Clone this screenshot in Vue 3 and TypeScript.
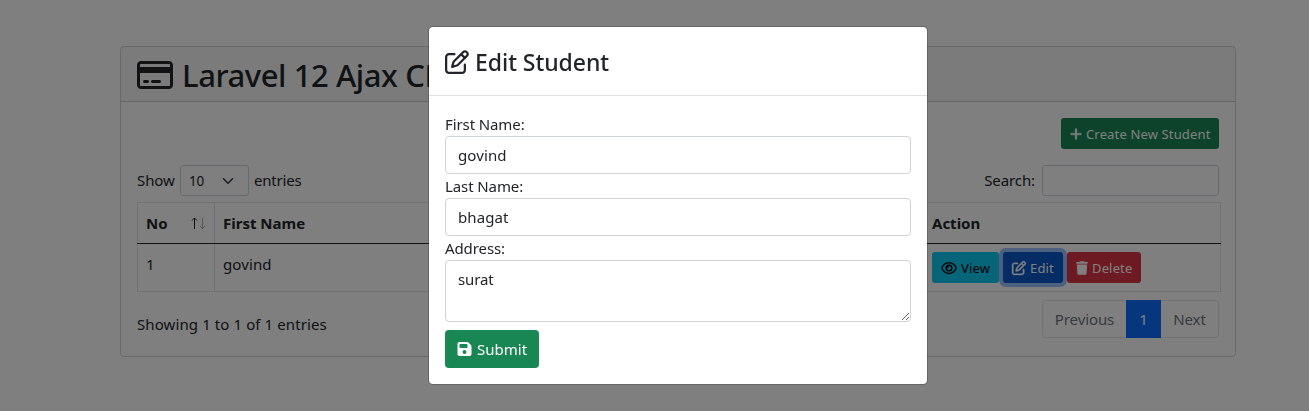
<script setup lang="ts">
import { ref } from 'vue'

interface Student {
  id: number
  firstName: string
  lastName: string
  address: string
}

const students = ref<Student[]>([
  { id: 1, firstName: 'govind', lastName: 'bhagat', address: 'surat' },
])

const form = ref({ firstName: 'govind', lastName: 'bhagat', address: 'surat' })
const search = ref('')
const pageSize = ref('10')

const icons = {
  card: 'M512 80c8.8 0 16 7.2 16 16v32H48V96c0-8.8 7.2-16 16-16H512zm16 144V416c0 8.8-7.2 16-16 16H64c-8.8 0-16-7.2-16-16V224H528zM64 32C28.7 32 0 60.7 0 96V416c0 35.3 28.7 64 64 64H512c35.3 0 64-28.7 64-64V96c0-35.3-28.7-64-64-64H64zm56 304c-13.3 0-24 10.7-24 24s10.7 24 24 24h48c13.3 0 24-10.7 24-24s-10.7-24-24-24H120zm128 0c-13.3 0-24 10.7-24 24s10.7 24 24 24H360c13.3 0 24-10.7 24-24s-10.7-24-24-24H248z',
  edit: 'M441 58.9L453.1 71c9.4 9.4 9.4 24.6 0 33.9L424 134.1 377.9 88 407 58.9c9.4-9.4 24.6-9.4 33.9 0zM209.8 256.2L344 121.9 390.1 168 255.8 302.2c-2.9 2.9-6.5 5-10.4 6.1l-58.5 16.7 16.7-58.5c1.1-3.9 3.2-7.5 6.1-10.4zM373.1 25L175.8 222.2c-8.7 8.7-15 19.4-18.3 31.1l-28.6 100c-2.4 8.4-.1 17.4 6.1 23.6s15.2 8.5 23.6 6.1l100-28.6c11.8-3.4 22.5-9.7 31.1-18.3L487 138.9c28.1-28.1 28.1-73.7 0-101.8L474.9 25C446.8-3.1 401.2-3.1 373.1 25zM88 64C39.4 64 0 103.4 0 152V424c0 48.6 39.4 88 88 88H360c48.6 0 88-39.4 88-88V312c0-13.3-10.7-24-24-24s-24 10.7-24 24V424c0 22.1-17.9 40-40 40H88c-22.1 0-40-17.9-40-40V152c0-22.1 17.9-40 40-40H200c13.3 0 24-10.7 24-24s-10.7-24-24-24H88z',
  eye: 'M288 80c-65.2 0-118.8 29.6-159.9 67.7C89.6 183.5 63 226 49.4 256c13.6 30 40.2 72.5 78.6 108.3C169.2 402.4 222.8 432 288 432s118.8-29.6 159.9-67.7C486.4 328.5 513 286 526.6 256c-13.6-30-40.2-72.5-78.6-108.3C406.8 109.6 353.2 80 288 80zM95.4 112.6C142.5 68.8 207.2 32 288 32s145.5 36.8 192.6 80.6c46.8 43.5 78.1 95.4 93 131.1c3.3 7.9 3.3 16.7 0 24.6c-14.9 35.7-46.2 87.7-93 131.1C433.5 443.2 368.8 480 288 480s-145.5-36.8-192.6-80.6C48.6 356 17.3 304 2.5 268.3c-3.3-7.9-3.3-16.7 0-24.6C17.3 208 48.6 156 95.4 112.6zM288 336c44.2 0 80-35.8 80-80s-35.8-80-80-80c-.7 0-1.3 0-2 0c1.3 5.1 2 10.5 2 16c0 35.3-28.7 64-64 64c-5.5 0-10.9-.7-16-2c0 .7 0 1.3 0 2c0 44.2 35.8 80 80 80zm0-208a128 128 0 1 1 0 256 128 128 0 1 1 0-256z',
  trash: 'M135.2 17.7L128 32H32C14.3 32 0 46.3 0 64S14.3 96 32 96H416c17.7 0 32-14.3 32-32s-14.3-32-32-32H320l-7.2-14.3C307.4 6.8 296.3 0 284.2 0H163.8c-12.1 0-23.2 6.8-28.6 17.7zM416 128H32L53.2 467c1.6 25.3 22.6 45 47.9 45H346.9c25.3 0 46.3-19.7 47.9-45L416 128z',
  save: 'M64 32C28.7 32 0 60.7 0 96V416c0 35.3 28.7 64 64 64H384c35.3 0 64-28.7 64-64V173.3c0-17-6.7-33.3-18.7-45.3L352 50.7C340 38.7 323.7 32 306.7 32H64zm0 96c0-17.7 14.3-32 32-32H288c17.7 0 32 14.3 32 32v64c0 17.7-14.3 32-32 32H96c-17.7 0-32-14.3-32-32V128zM224 288a64 64 0 1 1 0 128 64 64 0 1 1 0-128z',
  plus: 'M256 80c0-17.7-14.3-32-32-32s-32 14.3-32 32V224H48c-17.7 0-32 14.3-32 32s14.3 32 32 32H192V432c0 17.7 14.3 32 32 32s32-14.3 32-32V288H400c17.7 0 32-14.3 32-32s-14.3-32-32-32H256V80z',
}
</script>

<template>
  <div class="page">
    <main class="card">
      <h2 class="card-header">
        <svg class="icon-card" viewBox="0 0 576 512"><path :d="icons.card" /></svg>
        <span>Laravel 12 Ajax CRUD</span>
      </h2>
      <div class="card-body">
        <div class="toolbar">
          <button class="btn btn-sm create" type="button">
            <svg class="icon-narrow bold" viewBox="0 0 448 512"><path :d="icons.plus" /></svg>
            <span>Create New Student</span>
          </button>
        </div>
        <div class="controls">
          <label class="length">
            <span class="show">Show</span>
            <span class="select">
              <select v-model="pageSize">
                <option>10</option>
                <option>25</option>
              </select>
              <svg viewBox="0 0 16 16"><path d="m2 5 6 6 6-6" /></svg>
            </span>
            <span class="entries">entries</span>
          </label>
          <label class="filter">
            <span class="search">Search:</span>
            <input v-model="search" type="search" />
          </label>
        </div>
        <table>
          <colgroup>
            <col class="c-no" /><col class="c-first" /><col class="c-last" /><col class="c-action" />
          </colgroup>
          <thead>
            <tr>
              <th>
                <div class="sortable">
                  <span>No</span>
                  <svg viewBox="0 0 16 14">
                    <path class="asc" d="M4.500 13V2M2 4.500 4.500 2 7 4.500" />
                    <path class="desc" d="M12.500 1.500v11M10 10 12.500 12.500 15 10" />
                  </svg>
                </div>
              </th>
              <th>First Name</th>
              <th></th>
              <th>Action</th>
            </tr>
          </thead>
          <tbody>
            <tr v-for="s in students" :key="s.id">
              <td>{{ s.id }}</td>
              <td>{{ s.firstName }}</td>
              <td></td>
              <td>
                <div class="actions">
                  <button class="btn btn-sm view" type="button">
                    <svg class="icon-wide" viewBox="0 0 576 512"><path :d="icons.eye" /></svg>
                    <span>View</span>
                  </button>
                  <button class="btn btn-sm edit" type="button">
                    <svg class="icon-square bold" viewBox="0 0 512 512"><path :d="icons.edit" /></svg>
                    <span>Edit</span>
                  </button>
                  <button class="btn btn-sm delete" type="button">
                    <svg class="icon-narrow" viewBox="0 0 448 512"><path :d="icons.trash" /></svg>
                    <span>Delete</span>
                  </button>
                </div>
              </td>
            </tr>
          </tbody>
        </table>
        <div class="footer">
          <span class="info">Showing 1 to 1 of 1 entries</span>
          <nav class="pagination">
            <span class="prev">Previous</span>
            <span class="current">1</span>
            <span class="next">Next</span>
          </nav>
        </div>
      </div>
    </main>

    <div class="backdrop">
      <section class="modal">
        <header class="modal-header">
          <svg class="icon-title" viewBox="0 0 512 512"><path :d="icons.edit" /></svg>
          <span>Edit Student</span>
        </header>
        <form class="modal-body" @submit.prevent>
          <label for="first">First Name:</label>
          <input id="first" v-model="form.firstName" type="text" />
          <label for="last">Last Name:</label>
          <input id="last" v-model="form.lastName" type="text" />
          <label for="address">Address:</label>
          <textarea id="address" v-model="form.address"></textarea>
          <button class="btn submit" type="submit">
            <svg class="icon-save" viewBox="0 0 448 512"><path :d="icons.save" /></svg>
            <span>Submit</span>
          </button>
        </form>
      </section>
    </div>
  </div>
</template>

<style>
body {
  margin: 0;
  overflow: hidden;
}
</style>

<style scoped>
.page {
  box-sizing: border-box;
  height: 411px;
  padding: 46px 73px 0 120px;
  background: #fff;
  color: #212529;
  font: 15px/24px "Noto Sans", "Open Sans", sans-serif;
  letter-spacing: -0.1px;
}
.page * {
  box-sizing: border-box;
}
svg {
  display: block;
  flex: none;
  fill: currentColor;
}
.bold {
  stroke: currentColor;
  stroke-width: 14;
  overflow: visible;
}
input,
textarea,
select,
button {
  font: inherit;
  letter-spacing: inherit;
  color: inherit;
  margin: 0;
}
.card {
  width: 1116px;
  height: 311px;
  border: 1px solid rgba(0, 0, 0, 0.175);
  border-radius: 4px;
}
.card-header {
  display: flex;
  align-items: center;
  gap: 9px;
  height: 55px;
  margin: 0;
  padding: 2px 16px 0;
  background: rgba(0, 0, 0, 0.03);
  border-bottom: 1px solid rgba(0, 0, 0, 0.175);
  font-size: 31px;
  font-weight: 500;
  letter-spacing: -0.42px;
  line-height: 38px;
  white-space: nowrap;
}
.icon-card {
  width: 36px;
  height: 32px;
  margin-top: -1px;
}
.card-body {
  padding: 16px;
}
.toolbar {
  display: flex;
  justify-content: flex-end;
}
.btn {
  display: flex;
  align-items: center;
  border: 0;
  border-radius: 4px;
  color: #fff;
  white-space: nowrap;
}
.btn-sm {
  height: 31px;
  padding: 0 9px;
  gap: 4px;
  border-radius: 3px;
  font-size: 13px;
  line-height: 21px;
  letter-spacing: 0.15px;
}
.btn-sm span {
  padding-top: 1px;
}
.icon-narrow {
  width: 12px;
  height: 14px;
}
.icon-wide {
  width: 16px;
  height: 14px;
}
.icon-square {
  width: 14px;
  height: 14px;
}
.create {
  width: 158px;
  background: #198754;
}
.controls {
  display: flex;
  justify-content: space-between;
  margin-top: 16px;
}
.length,
.filter {
  display: flex;
  align-items: center;
  height: 31px;
}
.show,
.entries,
.search {
  padding-bottom: 2px;
}
.show {
  width: 43px;
}
.entries {
  letter-spacing: -0.2px;
}
.select {
  display: flex;
  align-items: center;
  width: 69px;
  height: 31px;
  margin-right: 5px;
  padding-left: 8px;
  border: 1px solid #ced4da;
  border-radius: 3px;
}
.select select {
  width: 33px;
  padding: 0;
  border: 0;
  background: none;
  appearance: none;
  font-size: 13.500px;
}
.select svg {
  width: 12px;
  height: 12px;
  fill: none;
  stroke: #343a40;
  stroke-width: 2;
  stroke-linecap: round;
  stroke-linejoin: round;
}
.filter input {
  width: 177px;
  height: 31px;
  margin-left: 7px;
  border: 1px solid #ced4da;
  border-radius: 3px;
  background: #fff;
}
table {
  width: 1084px;
  margin-top: 6px;
  border-collapse: collapse;
  table-layout: fixed;
}
.c-no {
  width: 77px;
}
.c-first {
  width: 354px;
}
.c-last {
  width: 355px;
}
th,
td {
  padding: 0 8px;
  border: 1px solid #dee2e6;
  text-align: left;
}
th {
  height: 41px;
  border-bottom-color: #212529;
  font-weight: 700;
  letter-spacing: 0;
}
td {
  height: 48px;
  padding-bottom: 8px;
  letter-spacing: 0.1px;
}
td:last-child {
  padding-bottom: 0;
}
.sortable {
  display: flex;
  align-items: center;
  justify-content: space-between;
}
.sortable svg {
  width: 16px;
  height: 14px;
  fill: none;
  stroke: #212529;
}
.desc {
  opacity: 0.35;
}
.actions {
  display: flex;
  gap: 4px;
}
.view {
  width: 67px;
  background: #0dcaf0;
  color: #000;
}
.edit {
  width: 60px;
  background: #0a58ca;
  box-shadow: 0 0 0 4px rgba(49, 132, 253, 0.5);
}
.delete {
  width: 74px;
  background: #dc3545;
}
.footer {
  display: flex;
  justify-content: space-between;
  align-items: flex-start;
  margin-top: 8px;
}
.info {
  padding-top: 12px;
  letter-spacing: 0.1px;
}
.pagination {
  display: flex;
  width: 177px;
  height: 38px;
  border: 1px solid #dee2e6;
  border-radius: 4px;
  color: #6c757d;
  line-height: 36px;
  text-align: center;
}
.prev {
  width: 83px;
}
.current {
  width: 35px;
  margin: -1px 0;
  background: #0d6efd;
  color: #fff;
  line-height: 38px;
}
.next {
  flex: 1;
}
.backdrop {
  position: fixed;
  inset: 0;
  padding: 26px 0 0 428px;
  background: rgba(0, 0, 0, 0.5);
}
.modal {
  width: 500px;
  height: 359px;
  border: 1px solid rgba(0, 0, 0, 0.2);
  border-radius: 5px;
  background: #fff;
  background-clip: padding-box;
}
.modal-header {
  display: flex;
  align-items: center;
  gap: 6px;
  height: 69px;
  padding: 2px 16px 0;
  border-bottom: 1px solid #dee2e6;
  font-size: 23px;
  font-weight: 500;
  letter-spacing: -0.05px;
}
.icon-title {
  width: 24px;
  height: 24px;
  margin-top: -1px;
}
.modal-body {
  display: flex;
  flex-direction: column;
  padding: 16px;
}
.modal-body label {
  height: 24px;
}
.modal-body input,
.modal-body textarea {
  display: block;
  width: 466px;
  height: 38px;
  padding: 6px 12px;
  border: 1px solid #ced4da;
  border-radius: 4px;
  background: #fff;
  outline: 0;
}
.modal-body input {
  letter-spacing: 0.1px;
}
.modal-body textarea {
  height: 62px;
  resize: vertical;
}
.submit {
  width: 94px;
  height: 38px;
  margin-top: 8px;
  padding: 0 12px;
  gap: 5px;
  background: #198754;
  letter-spacing: 0;
}
.icon-save {
  width: 15px;
  height: 16px;
}
</style>
